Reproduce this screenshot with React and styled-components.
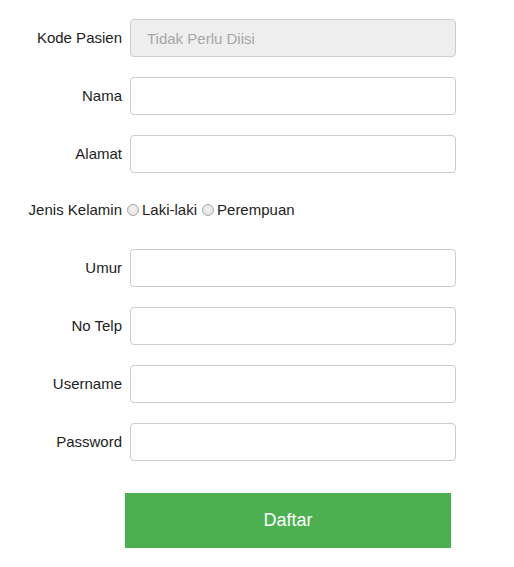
import React from 'react';
import styled, { createGlobalStyle } from 'styled-components';

const GlobalStyle = createGlobalStyle`
  body {
    margin: 0;
    background: #ffffff;
    font-family: "Liberation Sans", Arial, sans-serif;
    color: #222;
  }
`;

const Page = styled.div`
  padding: 19px 0 0 28px;
`;

const Form = styled.form`
  display: flex;
  flex-direction: column;
  gap: 20px;
`;

const FieldRow = styled.div`
  display: grid;
  grid-template-columns: 94px 326px;
  column-gap: 8px;
  align-items: center;
`;

const Label = styled.label`
  font-size: 15px;
  text-align: right;
  white-space: nowrap;
  margin-top: -2px;
`;

const Input = styled.input`
  box-sizing: border-box;
  width: 100%;
  height: 38px;
  padding: 0 16px;
  border: 1px solid #cccccc;
  border-radius: 4px;
  font-family: inherit;
  font-size: 15px;
  background: ${(p) => (p.disabled ? '#eeeeee' : '#ffffff')};
  color: #333;

  &::placeholder {
    color: #a6a6a6;
  }
`;

const GenderRow = styled.div`
  display: flex;
  align-items: center;
  height: 36px;
  margin-top: -2px;
  margin-bottom: 2px;
  font-size: 15px;
`;

const GenderLabel = styled.span`
  width: 94px;
  text-align: right;
  white-space: nowrap;
`;

const Radio = styled.input`
  appearance: none;
  box-sizing: border-box;
  width: 12px;
  height: 12px;
  margin: 1px 3px 0 5px;
  border-radius: 50%;
  border: 1px solid #a9a9a9;
  background: radial-gradient(circle at 50% 40%, #f4f4f4 0%, #dcdcdc 100%);
`;

const Button = styled.button`
  margin: 32px 0 0 97px;
  width: 326px;
  height: 55px;
  border: none;
  background: #4caf50;
  color: #ffffff;
  font-family: inherit;
  font-size: 18px;
  cursor: pointer;
`;

const fields = ['Nama', 'Alamat'];
const moreFields = [
  { label: 'Umur', type: 'text' },
  { label: 'No Telp', type: 'text' },
  { label: 'Username', type: 'text' },
  { label: 'Password', type: 'password' },
];

const App = () => {
  return (
    <Page>
      <GlobalStyle />
      <Form onSubmit={(e) => e.preventDefault()}>
        <FieldRow>
          <Label>Kode Pasien</Label>
          <Input disabled placeholder="Tidak Perlu Diisi" />
        </FieldRow>
        {fields.map((f) => (
          <FieldRow key={f}>
            <Label>{f}</Label>
            <Input type="text" />
          </FieldRow>
        ))}
        <GenderRow>
          <GenderLabel>Jenis Kelamin</GenderLabel>
          <Radio type="radio" name="jk" value="L" />
          <span>Laki-laki</span>
          <Radio type="radio" name="jk" value="P" />
          <span>Perempuan</span>
        </GenderRow>
        {moreFields.map((f) => (
          <FieldRow key={f.label}>
            <Label>{f.label}</Label>
            <Input type={f.type} />
          </FieldRow>
        ))}
      </Form>
      <Button type="button">Daftar</Button>
    </Page>
  );
};

export default App;
